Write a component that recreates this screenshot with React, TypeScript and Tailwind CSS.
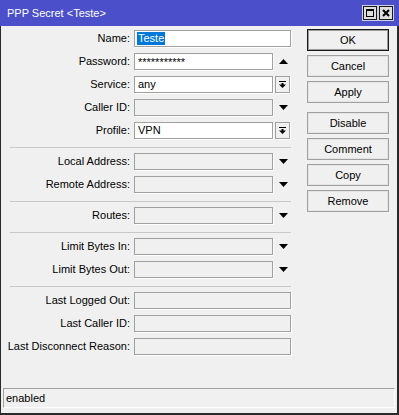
import React from "react";

const Down = () => (
  <svg width="9" height="5" viewBox="0 0 9 5" className="block">
    <polygon points="0,0 9,0 4.5,5" fill="#000" />
  </svg>
);
const Up = () => (
  <svg width="9" height="5" viewBox="0 0 9 5" className="block">
    <polygon points="0,5 9,5 4.5,0" fill="#000" />
  </svg>
);

const DropBtn = () => (
  <div className="ml-[2px] w-[15px] h-[17px] border border-[#a0a0a0] bg-[#f0f0f0] shadow-[1px_1px_0_#ffffff] flex items-center justify-center">
    <svg width="7" height="7" viewBox="0 0 7 7" className="block">
      <rect x="0" y="0" width="7" height="1" fill="#000" />
      <rect x="2.5" y="2" width="2" height="2" fill="#000" />
      <polygon points="0,3.5 7,3.5 3.5,7" fill="#000" />
    </svg>
  </div>
);

function Input({
  w,
  white,
  children,
}: {
  w: number;
  white?: boolean;
  children?: React.ReactNode;
}) {
  return (
    <div
      className={
        "h-[17px] border border-[#a0a0a0] shadow-[1px_1px_0_#ffffff] flex items-center pl-[2px] text-[11px] leading-none text-black overflow-hidden " +
        (white ? "bg-white" : "bg-[#f0f0f0]")
      }
      style={{ width: w }}
    >
      {children}
    </div>
  );
}

function Row({ label, children }: { label: string; children: React.ReactNode }) {
  return (
    <div className="flex items-center h-[17px] mb-[6px]">
      <div className="w-[129px] text-right text-[11px] leading-none text-black whitespace-nowrap">
        {label}
      </div>
      <div className="ml-[4px] flex items-center">{children}</div>
    </div>
  );
}

const Sep = () => <div className="ml-[9px] w-[281px] h-px bg-[#c8c8c8] mt-[2px] mb-[5px]" />;

function Btn({ label, def, mb }: { label: string; def?: boolean; mb: string }) {
  return (
    <div
      className={
        "w-[82px] h-[22px] flex items-center justify-center text-[11px] leading-none text-black bg-[#f0f0f0] " +
        (def
          ? "border border-[#1a1a1a] shadow-[inset_0_0_0_1px_#9a9a9a] "
          : "border border-[#a0a0a0] shadow-[inset_0_0_0_1px_#e4e4e4] ") +
        mb
      }
    >
      {label}
    </div>
  );
}

export default function App() {
  return (
    <div className="w-[399px] h-[415px] flex flex-col bg-[#f0f0f0] font-['Liberation_Sans',Arial,sans-serif] select-none">
      <div className="h-[26px] bg-[#4b4fca] flex items-center justify-between shrink-0">
        <div className="pl-[7px] text-white text-[11px] leading-none">PPP Secret &lt;Teste&gt;</div>
        <div className="flex items-center pr-[6px] gap-[2px]">
          <div className="w-[14px] h-[14px] border border-[#1a1a1a] bg-[#dedede] shadow-[0_0_0_1px_#cfcfe8] flex items-center justify-center">
            <svg width="8" height="8" viewBox="0 0 8 8" className="block">
              <rect x="0.5" y="0.5" width="7" height="7" fill="none" stroke="#000" strokeWidth="1" />
              <rect x="0" y="0" width="8" height="2" fill="#000" />
            </svg>
          </div>
          <div className="w-[14px] h-[14px] border border-[#1a1a1a] bg-[#dedede] shadow-[0_0_0_1px_#cfcfe8] flex items-center justify-center">
            <svg width="8" height="8" viewBox="0 0 8 8" className="block">
              <path d="M1 1 L7 7 M7 1 L1 7" stroke="#000" strokeWidth="2" />
            </svg>
          </div>
        </div>
      </div>
      <div className="flex-1 flex flex-col border-l border-r-2 border-b-2 border-[#2a2a2a]">
        <div className="flex pt-[3px]">
          <div className="w-[290px] pt-[1px] flex flex-col">
            <Row label="Name:">
              <Input w={157} white>
                <span className="bg-[#0078d7] text-white px-[1px] h-[13px] flex items-center">Teste</span>
              </Input>
            </Row>
            <Row label="Password:">
              <Input w={139} white>
                <span className="pl-[1px] text-[11px] pt-[2px]">***********</span>
              </Input>
              <div className="ml-[6px]"><Up /></div>
            </Row>
            <Row label="Service:">
              <Input w={139} white>
                <span className="pl-[1px]">any</span>
              </Input>
              <DropBtn />
            </Row>
            <Row label="Caller ID:">
              <Input w={139} />
              <div className="ml-[6px]"><Down /></div>
            </Row>
            <Row label="Profile:">
              <Input w={139} white>
                <span className="pl-[1px]">VPN</span>
              </Input>
              <DropBtn />
            </Row>
            <Sep />
            <Row label="Local Address:">
              <Input w={139} />
              <div className="ml-[6px]"><Down /></div>
            </Row>
            <Row label="Remote Address:">
              <Input w={139} />
              <div className="ml-[6px]"><Down /></div>
            </Row>
            <Sep />
            <Row label="Routes:">
              <Input w={139} />
              <div className="ml-[6px]"><Down /></div>
            </Row>
            <Sep />
            <Row label="Limit Bytes In:">
              <Input w={139} />
              <div className="ml-[6px]"><Down /></div>
            </Row>
            <Row label="Limit Bytes Out:">
              <Input w={139} />
              <div className="ml-[6px]"><Down /></div>
            </Row>
            <Sep />
            <Row label="Last Logged Out:">
              <Input w={157} />
            </Row>
            <Row label="Last Caller ID:">
              <Input w={157} />
            </Row>
            <Row label="Last Disconnect Reason:">
              <Input w={157} />
            </Row>
          </div>
          <div className="ml-[16px] flex flex-col">
            <Btn label="OK" def mb="mb-[4px]" />
            <Btn label="Cancel" mb="mb-[4px]" />
            <Btn label="Apply" mb="mb-[9px]" />
            <Btn label="Disable" mb="mb-[4px]" />
            <Btn label="Comment" mb="mb-[4px]" />
            <Btn label="Copy" mb="mb-[4px]" />
            <Btn label="Remove" mb="mb-0" />
          </div>
        </div>
        <div className="flex-1" />
        <div className="ml-[2px] mr-[2px] mb-[5px] h-[20px] border-t border-l border-[#a0a0a0] border-b border-r border-b-white border-r-white flex items-center pl-[2px] text-[11px] leading-none text-black">
          enabled
        </div>
      </div>
    </div>
  );
}
